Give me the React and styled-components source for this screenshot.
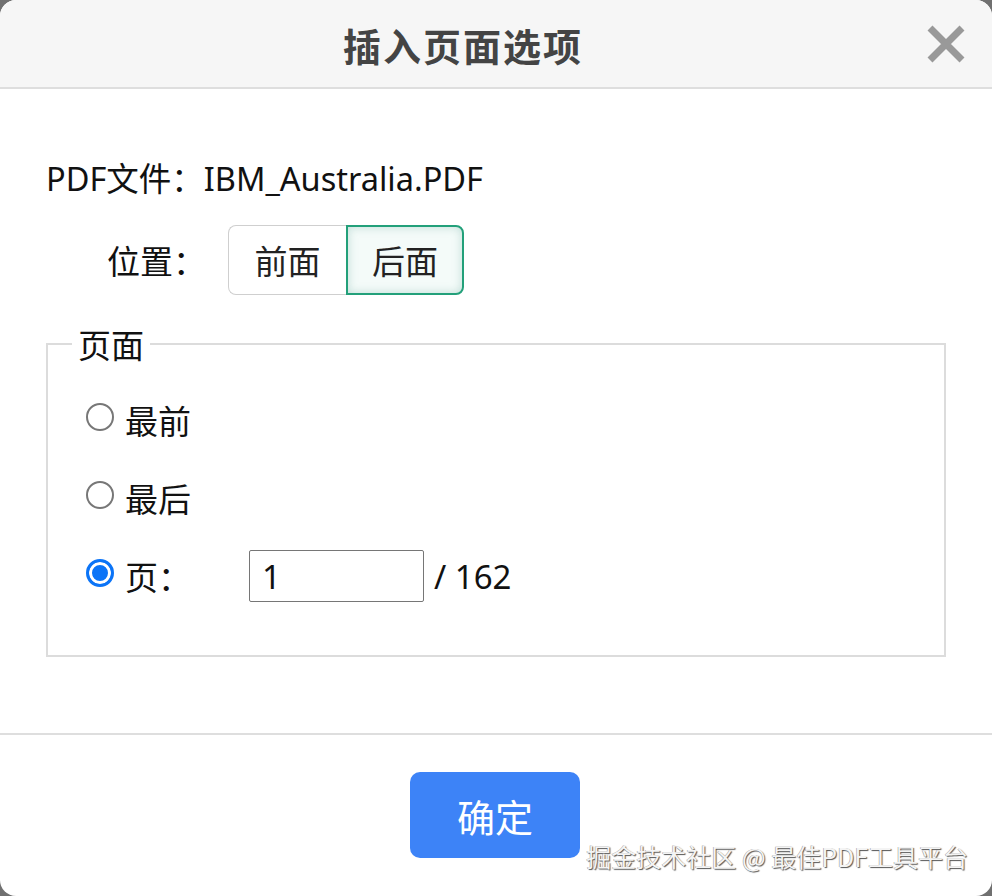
import React, { useState } from 'react';
import styled, { createGlobalStyle } from 'styled-components';

const GlobalStyle = createGlobalStyle`
  html, body {
    margin: 0;
    padding: 0;
    background: #707070;
  }
  body {
    font-family: "Noto Sans", "Noto Sans CJK SC", sans-serif;
    color: #111;
  }
`;

function CloseIcon() {
  return (
    <svg width="40" height="38" viewBox="0 0 40 38">
      <path d="M4 3 L36 35 M36 3 L4 35" stroke="#999" strokeWidth="7" />
    </svg>
  );
}

export default function App() {
  const [position, setPosition] = useState('after');
  const [page, setPage] = useState('page');
  const [pageNo, setPageNo] = useState('1');

  return (
    <>
      <GlobalStyle />
      <StDialog>
        <StHeader>
          <StTitle>插入页面选项</StTitle>
          <StClose aria-label="关闭">
            <CloseIcon />
          </StClose>
        </StHeader>

        <StBody>
          <StFileLine>PDF文件：IBM_Australia.PDF</StFileLine>
          <StPositionRow>
            <StPositionLabel>位置：</StPositionLabel>
            <StToggleGroup>
              <StToggle $active={position === 'before'} $first onClick={() => setPosition('before')}>
                前面
              </StToggle>
              <StToggle $active={position === 'after'} onClick={() => setPosition('after')}>
                后面
              </StToggle>
            </StToggleGroup>
          </StPositionRow>

          <StFieldset>
            <StLegend>页面</StLegend>
            <StRadioList>
              <StRadioRow onClick={() => setPage('first')}>
                <StRadio $checked={page === 'first'} />
                <StRadioText>最前</StRadioText>
              </StRadioRow>
              <StRadioRow onClick={() => setPage('last')}>
                <StRadio $checked={page === 'last'} />
                <StRadioText>最后</StRadioText>
              </StRadioRow>
              <StRadioRow onClick={() => setPage('page')}>
                <StRadio $checked={page === 'page'} />
                <StRadioText $wide>页：</StRadioText>
                <StPageInput value={pageNo} onChange={(e) => setPageNo(e.target.value)} />
                <StTotal>/ 162</StTotal>
              </StRadioRow>
            </StRadioList>
          </StFieldset>
        </StBody>

        <StFooter>
          <StOkButton>确定</StOkButton>
        </StFooter>

        <StWatermark>掘金技术社区 @ 最佳PDF工具平台</StWatermark>
      </StDialog>
    </>
  );
}

const StDialog = styled.div`
  position: relative;
  width: 992px;
  height: 896px;
  background: #fff;
  border-radius: 16px;
  overflow: hidden;
  display: flex;
  flex-direction: column;
`;

const StHeader = styled.div`
  height: 89px;
  border-bottom: 2px solid #dedede;
  background: #f6f6f6;
  display: flex;
  align-items: center;
  padding-right: 26px;
  box-sizing: border-box;
  flex-shrink: 0;
`;

const StTitle = styled.div`
  flex: 1;
  text-align: center;
  font-family: "Noto Sans CJK SC", sans-serif;
  font-size: 38px;
  font-weight: 700;
  letter-spacing: 2px;
  color: #444;
  padding-top: 2px;
`;

const StClose = styled.button`
  width: 40px;
  height: 40px;
  padding: 0;
  border: none;
  background: none;
  display: flex;
  align-items: center;
  justify-content: center;
  cursor: pointer;
`;

const StBody = styled.div`
  padding: 68px 46px 0 46px;
  display: flex;
  flex-direction: column;
`;

const StFileLine = styled.div`
  font-size: 32.5px;
  line-height: 44px;
`;

const StPositionRow = styled.div`
  display: flex;
  align-items: center;
  margin-top: 24px;
`;

const StPositionLabel = styled.div`
  width: 182px;
  padding-left: 61px;
  box-sizing: border-box;
  font-family: "Noto Sans CJK SC", sans-serif;
  font-size: 33px;
`;

const StToggleGroup = styled.div`
  display: flex;
`;

const StToggle = styled.button`
  width: 118px;
  height: 70px;
  box-sizing: border-box;
  padding: 0;
  font-family: "Noto Sans CJK SC", sans-serif;
  font-size: 33px;
  color: #222;
  cursor: pointer;
  border: ${(p) => (p.$active ? '2px solid #23a07a' : '1.5px solid #cfcfcf')};
  border-right: ${(p) => (p.$first && !p.$active ? 'none' : '')};
  border-radius: ${(p) => (p.$first ? '8px 0 0 8px' : '0 8px 8px 0')};
  background: ${(p) => (p.$active ? '#f4fbf9' : '#fff')};
  box-shadow: ${(p) => (p.$active ? 'inset 0 0 10px rgba(150, 195, 185, 0.55)' : 'none')};
`;

const StFieldset = styled.fieldset`
  margin: 31px 0 0 0;
  padding: 0 0 53px 0;
  border: 2px solid #dcdcdc;
  min-width: 0;
`;

const StLegend = styled.legend`
  margin-left: 24px;
  padding: 0 6px;
  font-family: "Noto Sans CJK SC", sans-serif;
  font-size: 33px;
  line-height: 36px;
`;

const StRadioList = styled.div`
  display: flex;
  flex-direction: column;
  gap: 26px;
  padding: 32px 0 0 38px;
`;

const StRadioRow = styled.div`
  display: flex;
  align-items: center;
  height: 52px;
  cursor: pointer;
`;

const StRadio = styled.span`
  width: 28px;
  height: 28px;
  box-sizing: border-box;
  border-radius: 50%;
  flex-shrink: 0;
  border: ${(p) => (p.$checked ? '3px solid #0b74f7' : '2px solid #777')};
  background: ${(p) => (p.$checked ? '#0b74f7' : '#fff')};
  box-shadow: ${(p) => (p.$checked ? 'inset 0 0 0 3px #fff' : 'none')};
  margin-top: -6px;
`;

const StRadioText = styled.span`
  font-family: "Noto Sans CJK SC", sans-serif;
  font-size: 33px;
  margin-left: 11px;
  width: ${(p) => (p.$wide ? '124px' : 'auto')};
`;

const StPageInput = styled.input`
  width: 175px;
  height: 52px;
  box-sizing: border-box;
  border: 1px solid #767676;
  border-radius: 2px;
  padding: 0 12px;
  font-family: "Noto Sans", sans-serif;
  font-size: 33px;
  color: #111;
  outline: none;
`;

const StTotal = styled.span`
  margin-left: 10px;
  font-size: 33px;
`;

const StFooter = styled.div`
  margin-top: 76px;
  border-top: 2px solid #dedede;
  padding-top: 37px;
  display: flex;
  justify-content: center;
`;

const StOkButton = styled.button`
  width: 170px;
  height: 86px;
  border: none;
  border-radius: 10px;
  background: #3d83f7;
  color: #fff;
  font-family: "Noto Sans CJK SC", sans-serif;
  font-size: 38px;
  cursor: pointer;
  margin-left: -2px;
`;

const StWatermark = styled.div`
  position: absolute;
  right: 24px;
  bottom: 22px;
  font-family: "Noto Sans CJK SC", sans-serif;
  font-size: 25px;
  color: #f4f4f4;
  text-shadow: 1px 1px 1px #555, -0.5px -0.5px 0 #999;
  pointer-events: none;
`;
